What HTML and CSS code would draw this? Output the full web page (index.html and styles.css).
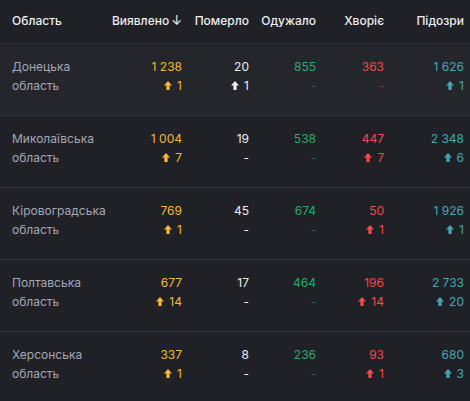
FILE: index.html
```html
<!DOCTYPE html>
<html lang="uk">
<head>
<meta charset="utf-8">
<link rel="stylesheet" href="styles.css">
</head>
<body>
<div class="table">
  <div class="row head">
    <div class="cell name">Область</div>
    <div class="cell">Виявлено<span class="sort">↓</span></div>
    <div class="cell">Померло</div>
    <div class="cell">Одужало</div>
    <div class="cell">Хворіє</div>
    <div class="cell">Підозри</div>
  </div>

  <div class="row hl">
    <div class="cell name">Донецька<br>область</div>
    <div class="cell c-yel"><div>1 238</div><div class="d"><svg class="ar" viewBox="0 0 10 11"><polygon points="5,0 10,5.5 7,5.5 7,11 3,11 3,5.5 0,5.5"/></svg>1</div></div>
    <div class="cell c-wht"><div>20</div><div class="d"><svg class="ar" viewBox="0 0 10 11"><polygon points="5,0 10,5.5 7,5.5 7,11 3,11 3,5.5 0,5.5"/></svg>1</div></div>
    <div class="cell c-grn"><div>855</div><div class="d dash">-</div></div>
    <div class="cell c-red"><div>363</div><div class="d dash">-</div></div>
    <div class="cell c-tea"><div>1 626</div><div class="d"><svg class="ar" viewBox="0 0 10 11"><polygon points="5,0 10,5.5 7,5.5 7,11 3,11 3,5.5 0,5.5"/></svg>1</div></div>
  </div>

  <div class="row">
    <div class="cell name">Миколаївська<br>область</div>
    <div class="cell c-yel"><div>1 004</div><div class="d"><svg class="ar" viewBox="0 0 10 11"><polygon points="5,0 10,5.5 7,5.5 7,11 3,11 3,5.5 0,5.5"/></svg>7</div></div>
    <div class="cell c-wht"><div>19</div><div class="d">-</div></div>
    <div class="cell c-grn"><div>538</div><div class="d dash">-</div></div>
    <div class="cell c-red"><div>447</div><div class="d"><svg class="ar" viewBox="0 0 10 11"><polygon points="5,0 10,5.5 7,5.5 7,11 3,11 3,5.5 0,5.5"/></svg>7</div></div>
    <div class="cell c-tea"><div>2 348</div><div class="d"><svg class="ar" viewBox="0 0 10 11"><polygon points="5,0 10,5.5 7,5.5 7,11 3,11 3,5.5 0,5.5"/></svg>6</div></div>
  </div>

  <div class="row">
    <div class="cell name">Кіровоградська<br>область</div>
    <div class="cell c-yel"><div>769</div><div class="d"><svg class="ar" viewBox="0 0 10 11"><polygon points="5,0 10,5.5 7,5.5 7,11 3,11 3,5.5 0,5.5"/></svg>1</div></div>
    <div class="cell c-wht"><div>45</div><div class="d">-</div></div>
    <div class="cell c-grn"><div>674</div><div class="d dash">-</div></div>
    <div class="cell c-red"><div>50</div><div class="d"><svg class="ar" viewBox="0 0 10 11"><polygon points="5,0 10,5.5 7,5.5 7,11 3,11 3,5.5 0,5.5"/></svg>1</div></div>
    <div class="cell c-tea"><div>1 926</div><div class="d"><svg class="ar" viewBox="0 0 10 11"><polygon points="5,0 10,5.5 7,5.5 7,11 3,11 3,5.5 0,5.5"/></svg>1</div></div>
  </div>

  <div class="row">
    <div class="cell name">Полтавська<br>область</div>
    <div class="cell c-yel"><div>677</div><div class="d"><svg class="ar" viewBox="0 0 10 11"><polygon points="5,0 10,5.5 7,5.5 7,11 3,11 3,5.5 0,5.5"/></svg>14</div></div>
    <div class="cell c-wht"><div>17</div><div class="d">-</div></div>
    <div class="cell c-grn"><div>464</div><div class="d dash">-</div></div>
    <div class="cell c-red"><div>196</div><div class="d"><svg class="ar" viewBox="0 0 10 11"><polygon points="5,0 10,5.5 7,5.5 7,11 3,11 3,5.5 0,5.5"/></svg>14</div></div>
    <div class="cell c-tea"><div>2 733</div><div class="d"><svg class="ar" viewBox="0 0 10 11"><polygon points="5,0 10,5.5 7,5.5 7,11 3,11 3,5.5 0,5.5"/></svg>20</div></div>
  </div>

  <div class="row">
    <div class="cell name">Херсонська<br>область</div>
    <div class="cell c-yel"><div>337</div><div class="d"><svg class="ar" viewBox="0 0 10 11"><polygon points="5,0 10,5.5 7,5.5 7,11 3,11 3,5.5 0,5.5"/></svg>1</div></div>
    <div class="cell c-wht"><div>8</div><div class="d">-</div></div>
    <div class="cell c-grn"><div>236</div><div class="d dash">-</div></div>
    <div class="cell c-red"><div>93</div><div class="d"><svg class="ar" viewBox="0 0 10 11"><polygon points="5,0 10,5.5 7,5.5 7,11 3,11 3,5.5 0,5.5"/></svg>1</div></div>
    <div class="cell c-tea"><div>680</div><div class="d"><svg class="ar" viewBox="0 0 10 11"><polygon points="5,0 10,5.5 7,5.5 7,11 3,11 3,5.5 0,5.5"/></svg>3</div></div>
  </div>
</div>
</body>
</html>
```

FILE: styles.css
```css
html, body {
  margin: 0;
  padding: 0;
  background: #1f2126;
  height: 100%;
}
body {
  font-family: Inter, "Noto Sans", sans-serif;
  font-size: 12px;
  color: #e6e6e6;
  overflow: hidden;
}
.table {
  display: flex;
  flex-direction: column;
}
.row {
  display: grid;
  grid-template-columns: 110px 72px 67px 67px 68px 80px;
  padding: 13px 6px 20px 0;
  line-height: 19px;
  border-bottom: 1px solid #2e3137;
}
.row.hl {
  background: #24262c;
}
.row.head {
  padding: 11px 6px 13px 0;
  font-weight: 500;
  color: #eceef2;
  border-bottom: 1px solid #2e3137;
}
.cell {
  text-align: right;
}
.cell.name {
  text-align: left;
  padding-left: 12px;
  color: #a3a8b7;
}
.head .cell.name {
  color: #eceef2;
}
.sort {
  margin-left: 2px;
  font-weight: 400;
  font-size: 13px;
}
.d {
  display: flex;
  justify-content: flex-end;
  align-items: center;
  gap: 5px;
}
.ar {
  width: 8px;
  height: 9px;
  fill: currentColor;
}
.c-yel { color: #f5b935; }
.c-wht { color: #eeeeee; }
.c-grn { color: #2aaa6c; }
.c-red { color: #ee4c4f; }
.c-tea { color: #44a8b3; }
.c-grn .dash { color: #1f6e4f; }
.c-red .dash { color: #8e3538; }
```
